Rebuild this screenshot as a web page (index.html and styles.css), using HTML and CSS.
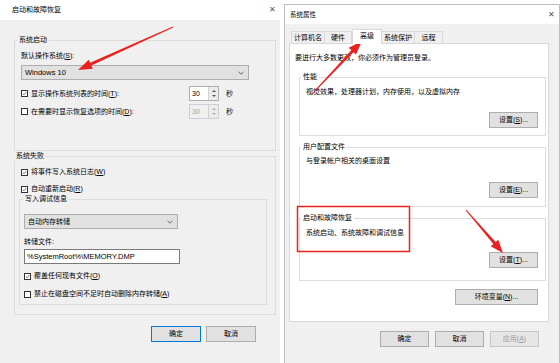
FILE: index.html
```html
<!DOCTYPE html>
<html lang="zh-CN">
<head>
<meta charset="utf-8">
<title>启动和故障恢复</title>
<link rel="stylesheet" href="styles.css">
</head>
<body>
<div class="win win-left">
  <div class="titlebar tb-left"><span>启动和故障恢复</span><span class="close">✕</span></div>
  <div class="body-left">
    <fieldset class="grp g-start">
      <legend class="lg-start">系统启动</legend>
      <div class="line l-default">默认操作系统(<u>S</u>):</div>
      <div class="select sel-os"><span>Windows 10</span><svg class="chev" width="6" height="4" viewBox="0 0 6 4"><path d="M0.5 0.8 L3 3.2 L5.5 0.8" fill="none" stroke="#444" stroke-width="0.8"/></svg></div>
      <div class="spin-row r-list">
        <div class="cb-row cb-wide"><span class="cb"><svg width="7" height="7" viewBox="0 0 7 7"><path d="M1.2 3.6 L2.9 5.2 L5.9 1.6" fill="none" stroke="#222" stroke-width="0.9"/></svg></span><span>显示操作系统列表的时间(<u>T</u>):</span></div>
        <div class="spin"><span class="val">30</span><span class="arrows"><i class="up"></i><i class="down"></i></span></div>
        <span class="unit">秒</span>
      </div>
      <div class="spin-row r-rec">
        <div class="cb-row cb-wide"><span class="cb"></span><span>在需要时显示恢复选项的时间(<u>D</u>):</span></div>
        <div class="spin disabled"><span class="val">30</span><span class="arrows"><i class="up"></i><i class="down"></i></span></div>
        <span class="unit">秒</span>
      </div>
    </fieldset>

    <fieldset class="grp g-fail">
      <legend class="lg-fail">系统失败</legend>
      <div class="cb-row r-log"><span class="cb"><svg width="7" height="7" viewBox="0 0 7 7"><path d="M1.2 3.6 L2.9 5.2 L5.9 1.6" fill="none" stroke="#222" stroke-width="0.9"/></svg></span><span>将事件写入系统日志(<u>W</u>)</span></div>
      <div class="cb-row r-restart"><span class="cb"><svg width="7" height="7" viewBox="0 0 7 7"><path d="M1.2 3.6 L2.9 5.2 L5.9 1.6" fill="none" stroke="#222" stroke-width="0.9"/></svg></span><span>自动重新启动(<u>R</u>)</span></div>
      <fieldset class="grp g-debug">
        <legend class="lg-debug">写入调试信息</legend>
        <div class="select sel-dump"><span>自动内存转储</span><svg class="chev" width="6" height="4" viewBox="0 0 6 4"><path d="M0.5 0.8 L3 3.2 L5.5 0.8" fill="none" stroke="#444" stroke-width="0.8"/></svg></div>
        <div class="line l-file">转储文件:</div>
        <div class="input">%SystemRoot%\MEMORY.DMP</div>
        <div class="cb-row r-over"><span class="cb"><svg width="7" height="7" viewBox="0 0 7 7"><path d="M1.2 3.6 L2.9 5.2 L5.9 1.6" fill="none" stroke="#222" stroke-width="0.9"/></svg></span><span>覆盖任何现有文件(<u>O</u>)</span></div>
        <div class="cb-row r-del"><span class="cb"></span><span>禁止在磁盘空间不足时自动删除内存转储(<u>A</u>)</span></div>
      </fieldset>
    </fieldset>

    <div class="btn-row br-left">
      <div class="btn default">确定</div>
      <div class="btn">取消</div>
    </div>
  </div>
</div>

<div class="win win-right">
  <div class="titlebar tb-right"><span>系统属性</span><span class="close">✕</span></div>
  <div class="body-right">
    <div class="tabs">
      <span class="tab t1">计算机名</span>
      <span class="tab t2">硬件</span>
      <span class="tab t3 active">高级</span>
      <span class="tab t4">系统保护</span>
      <span class="tab t5">远程</span>
    </div>
    <div class="panel">
      <div class="line l-admin">要进行大多数更改，你必须作为管理员登录。</div>
      <fieldset class="grp pg g-perf">
        <legend class="lg-r">性能</legend>
        <div class="line pg-text">视觉效果，处理器计划，内存使用，以及虚拟内存</div>
        <div class="pg-btn"><div class="btn b-set">设置(<u>S</u>)...</div></div>
      </fieldset>
      <fieldset class="grp pg g-prof">
        <legend class="lg-r">用户配置文件</legend>
        <div class="line pg-text">与登录帐户相关的桌面设置</div>
        <div class="pg-btn"><div class="btn b-set">设置(<u>E</u>)...</div></div>
      </fieldset>
      <fieldset class="grp pg g-boot">
        <legend class="lg-r">启动和故障恢复</legend>
        <div class="line pg-text">系统启动、系统故障和调试信息</div>
        <div class="pg-btn"><div class="btn b-set">设置(<u>T</u>)...</div></div>
      </fieldset>
      <div class="env-row"><div class="btn b-env">环境变量(<u>N</u>)...</div></div>
    </div>
    <div class="btn-row br-right">
      <div class="btn">确定</div>
      <div class="btn">取消</div>
      <div class="btn disabled">应用(<u>A</u>)</div>
    </div>
  </div>
</div>

<svg class="annot" width="560" height="363" viewBox="0 0 560 363">
  <polygon fill="#e8231f" points="172.8,26.54 90.13,62.86 88.69,59.67 78,70 92.81,68.79 91.37,65.6 173.2,27.46"/>
  <polygon fill="#e8231f" points="311.64,93.66 351.31,50.15 348.77,47.75 362,41 356.04,54.61 353.49,52.21 312.36,94.34"/>
  <polygon fill="#e8231f" points="466.38,209.67 495.64,242.12 498.29,239.84 503,253 490.7,246.36 493.36,244.08 465.62,210.33"/>
  <rect x="297.5" y="206.5" width="112" height="45" fill="none" stroke="#e8231f" stroke-width="1.5"/>
</svg>
</body>
</html>
```

FILE: styles.css
```css
* { box-sizing: border-box; }
html, body { margin: 0; padding: 0; }
body {
  width: 560px;
  height: 363px;
  overflow: hidden;
  background: #fff;
  font-family: "Liberation Sans", "Noto Sans CJK SC", sans-serif;
  font-size: 7px;
  line-height: 10px;
  color: #000;
  display: flex;
  align-items: flex-start;
  position: relative;
}
u { text-decoration: underline; text-underline-offset: 1px; }

.win { display: flex; flex-direction: column; }
.win-left { width: 280px; height: 363px; }
.titlebar {
  background: #fff;
  display: flex;
  align-items: center;
  justify-content: space-between;
}
.tb-left { height: 20px; padding: 0 4px 0 12px; }
.close { font-size: 8px; color: #555; }

.body-left {
  flex: 1;
  background: #f0f0f0;
  padding: 15px 4px 0 14px;
  display: flex;
  flex-direction: column;
}

fieldset.grp {
  margin: 0;
  border: 1px solid #dcdcdc;
  min-width: 0;
  display: flex;
  flex-direction: column;
  align-items: flex-start;
}
legend { padding: 0 2px; line-height: 10px; }

.g-start { padding: 0 6px 31px 6px; }
.lg-start { margin-left: -4px; }
.l-default { margin-top: 6px; height: 10px; }
.select {
  height: 15px;
  background: #e1e1e1;
  border: 1px solid #adadad;
  display: flex;
  align-items: center;
  justify-content: space-between;
  padding: 0 4px 0 3px;
}
.sel-os { width: 228px; margin-top: 4px; font-size: 7.5px; }
.spin-row { display: flex; align-items: center; height: 15px; }
.r-list { margin-top: 6px; }
.r-rec { margin-top: 3px; }
.cb-row { display: flex; align-items: center; height: 10px; }
.cb-wide { width: 168px; }
.cb {
  width: 7px;
  height: 7px;
  border: 1px solid #333;
  background: #fff;
  margin-right: 3px;
  display: flex;
  align-items: center;
  justify-content: center;
  flex: none;
}
.cb svg { display: block; }
.spin {
  width: 30px;
  height: 15px;
  border: 1px solid #adadad;
  background: #fff;
  display: flex;
}
.spin .val { flex: 1; padding-left: 2px; line-height: 13px; }
.spin .arrows {
  width: 10px;
  border-left: 1px solid #d0d0d0;
  background: #ececec;
  display: flex;
  flex-direction: column;
  align-items: center;
  justify-content: space-around;
  padding: 2px 0;
}
.arrows i { display: block; width: 0; height: 0; border-left: 2px solid transparent; border-right: 2px solid transparent; }
.arrows .up { border-bottom: 2px solid #555; }
.arrows .down { border-top: 2px solid #555; }
.spin.disabled { background: #f0f0f0; border-color: #cfcfcf; color: #a0a0a0; }
.spin.disabled .arrows .up { border-bottom-color: #aaa; }
.spin.disabled .arrows .down { border-top-color: #aaa; }
.unit { margin-left: 7px; }

.g-fail { margin-top: 6px; padding: 0 8px 9px 4px; }
.lg-fail { margin-left: -5px; }
.r-log { margin-top: 6px; margin-left: 2px; }
.r-restart { margin-top: 7px; margin-left: 2px; }
.g-debug { margin-top: 6px; width: 248px; padding: 0 4px 5px 4px; }
.lg-debug { margin-left: -1px; }
.sel-dump { width: 154px; margin-top: 10px; }
.l-file { margin-top: 8px; height: 10px; }
.input {
  width: 156px;
  height: 15px;
  margin-top: 2px;
  border: 1px solid #7a7a7a;
  background: #fff;
  padding-left: 2px;
  line-height: 13px;
  font-size: 7.5px;
}
.r-over { margin-top: 7px; }
.r-del { margin-top: 8px; }

.btn {
  height: 16px;
  border: 1px solid #adadad;
  background: #e1e1e1;
  display: flex;
  align-items: center;
  justify-content: center;
  width: 49px;
}
.btn.default { border-color: #0078d7; }
.btn.disabled { color: #9c9c9c; border-color: #c6c6c6; background: #e6e6e6; }
.btn-row { display: flex; justify-content: flex-end; }
.br-left { margin-top: 11px; padding-right: 20px; gap: 5px; }
.br-left .btn { width: 50px; }

.win-right {
  flex: 1;
  height: 359px;
  margin: 4px 0 0 4px;
  border-top: 1px solid #bdbdbd;
  border-left: 1px solid #bdbdbd;
  border-right: 1px solid #bdbdbd;
}
.tb-right { height: 19px; padding: 0 4px 0 5px; font-size: 6.5px; }
.body-right {
  flex: 1;
  background: #f0f0f0;
  padding: 0 10px 0 4px;
  display: flex;
  flex-direction: column;
}
.tabs { height: 19px; display: flex; align-items: flex-end; padding-left: 2px; }
.tab {
  height: 12px;
  border: 1px solid #d9d9d9;
  border-bottom: none;
  background: #f0f0f0;
  display: flex;
  align-items: center;
  justify-content: center;
}
.t1 { width: 34px; }
.t2 { width: 27px; border-left: none; }
.t3 { width: 30px; }
.t4 { width: 33px; border-left: none; }
.t5 { width: 28px; border-left: none; }
.tab.active {
  height: 15px;
  background: #fff;
  margin-bottom: -1px;
  position: relative;
  z-index: 1;
  padding-bottom: 2px;
}
.panel {
  height: 279px;
  background: #fff;
  border: 1px solid #d9d9d9;
  padding: 9px 2px 0 5px;
  display: flex;
  flex-direction: column;
}
.l-admin { height: 10px; }
fieldset.pg { margin-left: 4px; width: 247px; padding: 0 7px 0 6px; align-items: stretch; }
.lg-r { margin-left: -5px; }
.pg-text { height: 10px; }
.pg-btn { display: flex; justify-content: flex-end; }
fieldset.g-perf { margin-top: 9px; padding-bottom: 7px; }
.g-perf .pg-text { margin-top: 5px; }
.g-perf .pg-btn { margin-top: 15px; }
fieldset.g-prof { margin-top: 6px; padding-bottom: 8px; }
.g-prof .pg-text { margin-top: 4px; }
.g-prof .pg-btn { margin-top: 16px; }
fieldset.g-boot { margin-top: 6px; padding-bottom: 12px; }
.g-boot .pg-text { margin-top: 5px; }
.g-boot .pg-btn { margin-top: 14px; }
.env-row { display: flex; justify-content: flex-end; margin-top: 8px; padding-right: 8px; }
.b-env { width: 83px; }
.br-right { margin-top: 9px; gap: 6px; padding-right: 10px; }

.annot { position: absolute; left: 0; top: 0; pointer-events: none; }
```
